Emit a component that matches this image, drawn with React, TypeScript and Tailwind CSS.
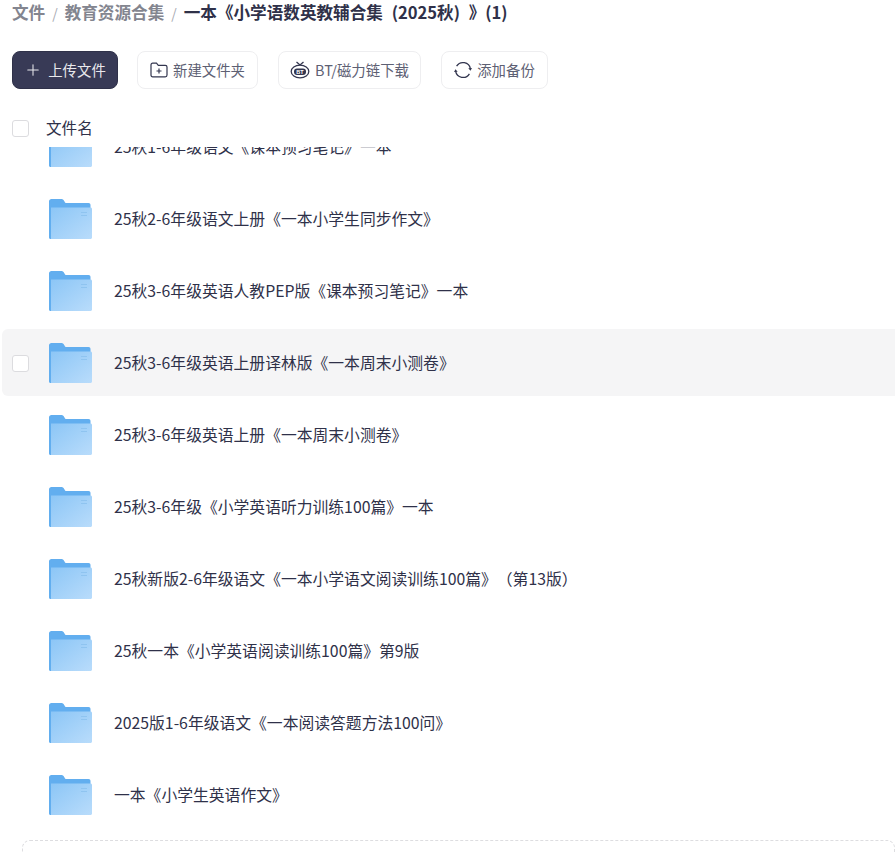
import { Plus } from "lucide-react";

const files = [
  "25秋1-6年级语文《课本预习笔记》一本",
  "25秋2-6年级语文上册《一本小学生同步作文》",
  "25秋3-6年级英语人教PEP版《课本预习笔记》一本",
  "25秋3-6年级英语上册译林版《一本周末小测卷》",
  "25秋3-6年级英语上册《一本周末小测卷》",
  "25秋3-6年级《小学英语听力训练100篇》一本",
  "25秋新版2-6年级语文《一本小学语文阅读训练100篇》（第13版）",
  "25秋一本《小学英语阅读训练100篇》第9版",
  "2025版1-6年级语文《一本阅读答题方法100问》",
  "一本《小学生英语作文》",
];

const FolderIcon = () => (
  <svg width="44" height="42" viewBox="0 0 44 42" className="shrink-0">
    <defs>
      <linearGradient id="folderFront" x1="0" y1="0" x2="1" y2="1">
        <stop offset="0" stopColor="#8cc6f6" />
        <stop offset="1" stopColor="#b9dcfb" />
      </linearGradient>
    </defs>
    <path
      d="M1 3.500C1 2 2 1 3.500 1H13.500C15 1 15.800 2 16.500 3.500C17 4.500 17.500 5 18.500 5H40.500C41.800 5 42.500 5.800 42.500 7V12H1V3.500Z"
      fill="#62aeef"
    />
    <path d="M1 9H4V41H2.500C1.600 41 1 40.400 1 39.500V9Z" fill="#62aeef" />
    <path
      d="M3 9.500H42.500C43.300 9.500 44 10.200 44 11V39.500C44 40.400 43.300 41 42.500 41H3V9.500Z"
      fill="url(#folderFront)"
    />
    <rect x="33" y="14" width="6" height="1" fill="#8fc4f0" />
    <rect x="33" y="17" width="6" height="1" fill="#8fc4f0" />
  </svg>
);

const NewFolderIcon = () => (
  <svg width="18" height="16" viewBox="0 0 18 16" fill="none" stroke="#33364f" strokeWidth="1.2">
    <path d="M1 3C1 2 1.700 1.200 2.700 1.200H6.500L8.300 3.300H15.300C16.300 3.300 17 4 17 5V13C17 14 16.300 14.800 15.300 14.800H2.700C1.700 14.800 1 14 1 13V3Z" />
    <path d="M9 6.500V11.500M6.500 9H11.500" />
  </svg>
);

const BtIcon = () => (
  <svg width="20" height="18" viewBox="0 0 20 18" fill="none" stroke="#33364f" strokeWidth="1.3">
    <path d="M6.500 1L10 4L13.500 1" />
    <ellipse cx="10" cy="10.500" rx="8.800" ry="6.300" />
    <rect x="4" y="7.500" width="12" height="6.500" rx="3" fill="#33364f" stroke="none" />
    <text x="10" y="12.700" textAnchor="middle" fontSize="5.500" fontWeight="700" fill="#fff" stroke="none" fontFamily="Liberation Sans">
      BT
    </text>
  </svg>
);

const BackupIcon = () => (
  <svg width="18" height="18" viewBox="0 0 18 18" fill="none" stroke="#33364f" strokeWidth="1.3">
    <path d="M2.600 5.200A7.500 7.500 0 0 1 16.400 7.800" />
    <path d="M15.400 12.800A7.500 7.500 0 0 1 1.600 10.200" />
    <path d="M14.300 7.200L16.500 9.700L18 6.900" fill="#33364f" stroke="none" />
    <path d="M3.700 10.800L1.500 8.300L0 11.100" fill="#33364f" stroke="none" />
  </svg>
);

const Checkbox = () => (
  <span className="block w-[17px] h-[17px] rounded-[3px] border border-[#dcdcdf] bg-white shrink-0" />
);

const ToolButton = ({ icon, label, className }: { icon: React.ReactNode; label: string; className: string }) => (
  <button className={`h-[38px] pb-px flex items-center justify-center gap-[5px] rounded-lg border border-[#eeeef0] bg-white text-[14.4px] text-[#5d6073] ${className}`}>
    {icon}
    {label}
  </button>
);

export default function App() {
  return (
    <div className="h-[853px] w-[895px] overflow-hidden bg-white font-['Noto_Sans_CJK_SC','Noto_Sans',sans-serif] text-[#2f3149] [text-spacing-trim:space-all]">
      <div className="-mt-[1px] pl-3 h-[27px] flex items-center gap-[7px] text-[16.6px] font-semibold whitespace-nowrap">
        <span className="text-[#83858f]">文件</span>
        <span className="text-[#a9abb3] font-normal text-sm">/</span>
        <span className="text-[#83858f]">教育资源合集</span>
        <span className="text-[#a9abb3] font-normal text-sm">/</span>
        <span className="text-[#2f3149] [word-spacing:5px]">一本《小学语数英教辅合集 (2025秋) 》(1)</span>
      </div>

      <div className="mt-[25px] ml-3 flex items-center">
        <button className="w-[106px] h-[38px] pb-px flex items-center justify-center gap-[6px] rounded-lg bg-[#383a56] text-[14.4px] text-[#e8e8ec] border border-[#2f3149]">
          <Plus size={18} strokeWidth={1.4} />
          上传文件
        </button>
        <ToolButton className="ml-[19px] w-[121px]" icon={<NewFolderIcon />} label="新建文件夹" />
        <ToolButton className="ml-5 w-[143px]" icon={<BtIcon />} label="BT/磁力链下载" />
        <ToolButton className="ml-5 w-[107px]" icon={<BackupIcon />} label="添加备份" />
      </div>

      <div className="mt-5 h-[38px] pl-3 flex items-center text-[15.6px]">
        <Checkbox />
        <span className="ml-[17px]">文件名</span>
      </div>

      <div className="h-[707px] overflow-hidden ml-[2px]">
        <div className="-mt-[36px]">
          {files.map((name, i) => (
            <div
              key={name}
              className={`h-[72px] flex items-center pl-[10px] ${i === 3 ? "relative" : ""}`}
            >
              {i === 3 && (
                <div className="absolute left-0 right-0 top-[2px] bottom-[3px] rounded-l-md bg-[#f5f5f6]" />
              )}
              <div className="relative w-[17px] shrink-0">{i === 3 && <Checkbox />}</div>
              <div className="relative ml-[19px]">
                <FolderIcon />
              </div>
              <span className="relative ml-[22px] text-[15.8px] whitespace-nowrap">{name}</span>
            </div>
          ))}
          <div className="mt-[9px] ml-5 h-[60px] rounded-lg border border-dashed border-[#dddde0]" />
        </div>
      </div>
    </div>
  );
}
